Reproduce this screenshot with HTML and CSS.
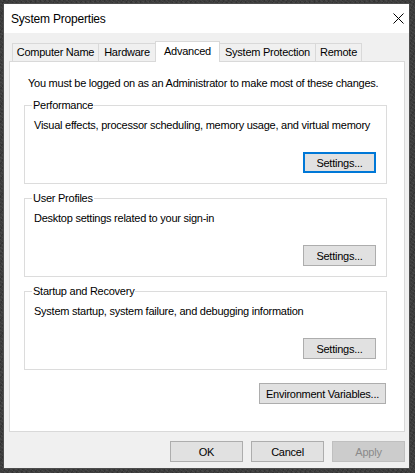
FILE: index.html
```html
<!DOCTYPE html>
<html lang="en">

<head>
    <meta charset="UTF-8">
    <meta name="viewport" content="width=device-width, initial-scale=1.0">
    <title>System Properties</title>
    <link rel="stylesheet" href="styles.css">
</head>

<body>
    <div class="window">
        <div class="titlebar">
            <span class="title">System Properties</span>
            <button class="close" aria-label="Close">
                <svg width="11" height="11" viewBox="0 0 11 11">
                    <path d="M0.5 0.5 L10.5 10.5 M10.5 0.5 L0.5 10.5" stroke="#000" stroke-width="1" fill="none" />
                </svg>
            </button>
        </div>

        <div class="content">
            <ul class="tabs">
                <li class="tab w-name">Computer Name</li>
                <li class="tab w-hw">Hardware</li>
                <li class="tab w-adv selected">Advanced</li>
                <li class="tab w-sp">System Protection</li>
                <li class="tab w-rem">Remote</li>
            </ul>

            <div class="panel">
                <p class="note">You must be logged on as an Administrator to make most of these changes.</p>

                <fieldset class="group">
                    <legend>Performance</legend>
                    <p class="desc">Visual effects, processor scheduling, memory usage, and virtual memory</p>
                    <div class="row">
                        <button class="btn focused">Settings...</button>
                    </div>
                </fieldset>

                <fieldset class="group">
                    <legend>User Profiles</legend>
                    <p class="desc">Desktop settings related to your sign-in</p>
                    <div class="row">
                        <button class="btn">Settings...</button>
                    </div>
                </fieldset>

                <fieldset class="group">
                    <legend>Startup and Recovery</legend>
                    <p class="desc">System startup, system failure, and debugging information</p>
                    <div class="row">
                        <button class="btn">Settings...</button>
                    </div>
                </fieldset>

                <div class="env">
                    <button class="btn wide">Environment Variables...</button>
                </div>
            </div>

            <div class="actions">
                <button class="btn">OK</button>
                <button class="btn">Cancel</button>
                <button class="btn" disabled>Apply</button>
            </div>
        </div>
    </div>
</body>

</html>
```

FILE: styles.css
```css
* {
    padding: 0;
    margin: 0;
    box-sizing: border-box;
}

body {
    width: 415px;
    height: 473px;
    overflow: hidden;
    padding: 3px 0 0 3px;
    background-color: #3c3c3c;
    background-image:
        repeating-linear-gradient(37deg, rgba(255, 255, 255, 0.06) 0 1px, transparent 1px 3px),
        repeating-linear-gradient(-61deg, rgba(0, 0, 0, 0.15) 0 1px, transparent 1px 4px);
    font-family: "Liberation Sans", Arial, sans-serif;
    font-size: 11px;
    letter-spacing: -0.25px;
    color: #000;
    white-space: nowrap;
}

.window {
    width: 407px;
    height: 466px;
    border: 1px solid #4d4d4d;
    background: #f0f0f0;
    display: flex;
    flex-direction: column;
}

/* title bar */
.titlebar {
    height: 29px;
    flex: none;
    background: #fff;
    display: flex;
    align-items: center;
    justify-content: space-between;
    padding-left: 7px;
}

.title {
    font-size: 12px;
    letter-spacing: -0.2px;
}

.close {
    border: none;
    background: none;
    width: 22px;
    height: 29px;
    display: flex;
    align-items: center;
    justify-content: center;
}

.close svg {
    display: block;
}

/* tabbed area */
.content {
    flex: 1;
    padding: 0 4px 0 5px;
}

.tabs {
    list-style: none;
    display: flex;
    align-items: flex-end;
    height: 28px;
    padding-left: 3px;
}

.tab {
    height: 18px;
    border: 1px solid #d9d9d9;
    border-bottom: none;
    background: #f0f0f0;
    margin-right: -1px;
    text-align: center;
    line-height: 17px;
}

.tab.selected {
    height: 21px;
    background: #fff;
    margin-bottom: -1px;
    position: relative;
    z-index: 1;
    line-height: 18px;
}

.w-name { width: 87px; }
.w-hw { width: 58px; }
.w-adv { width: 65px; }
.w-sp { width: 97px; }
.w-rem { width: 47px; }

.panel {
    height: 371px;
    background: #fff;
    border: 1px solid #d9d9d9;
    padding: 13px 17px 0 14px;
}

.note {
    padding-left: 4px;
    line-height: 16px;
}

/* group boxes */
.group {
    border: 1px solid #dcdcdc;
    height: 87px;
    margin-top: 6px;
    padding: 0 10px 0 9px;
}

.group legend {
    padding: 0 1px;
    margin-left: -2px;
    line-height: 16px;
}

.desc {
    margin-top: 4px;
    line-height: 16px;
}

.row {
    display: flex;
    justify-content: flex-end;
    margin-top: 19px;
}

/* push buttons */
.btn {
    font: inherit;
    letter-spacing: inherit;
    color: #000;
    background: #e1e1e1;
    border: 1px solid #adadad;
    width: 73px;
    height: 21px;
    padding: 0;
}

.btn.focused {
    border: 2px solid #0078d7;
}

.btn.wide {
    width: 127px;
}

.btn:disabled {
    background: #cccccc;
    border-color: #bfbfbf;
    color: #8a8a8a;
}

.env {
    display: flex;
    justify-content: flex-end;
    margin-top: 13px;
    margin-right: 1px;
}

.actions {
    display: flex;
    justify-content: flex-end;
    gap: 8px;
    padding-top: 9px;
}
```
